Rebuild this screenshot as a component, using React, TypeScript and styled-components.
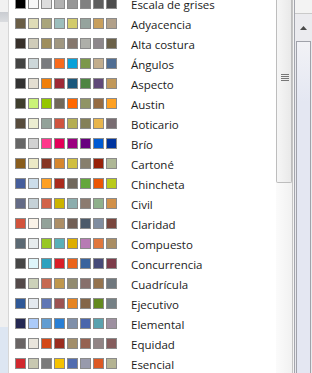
import React from "react";
import styled, { createGlobalStyle } from "styled-components";

const Global = createGlobalStyle`
  html, body { margin: 0; padding: 0; background: #ffffff; }
  body { width: 312px; height: 373px; overflow: hidden; }
  #root { width: 312px; height: 373px; }
`;

type Theme = { name: string; colors: string[] };

const themes: Theme[] = [
  { name: "Escala de grises", colors: ["#000000", "#F8F8F8", "#DDDDDD", "#B2B2B2", "#969696", "#808080", "#5F5F5F", "#4D4D4D"] },
  { name: "Adyacencia", colors: ["#695D46", "#DFDCB7", "#A9A57C", "#9CBEBD", "#D2CB6C", "#95A39D", "#C89F5D", "#B1A089"] },
  { name: "Alta costura", colors: ["#37302A", "#D0CCB9", "#9E8E5C", "#A09781", "#85776D", "#AEAFA9", "#8D878B", "#6B6149"] },
  { name: "Ángulos", colors: ["#434342", "#CDD7D9", "#797B7E", "#F96A1B", "#08A1D9", "#7C984A", "#C2AD8D", "#506E94"] },
  { name: "Aspecto", colors: ["#323232", "#E3DED1", "#F07F09", "#9F2936", "#1B587C", "#4E8542", "#604878", "#C19859"] },
  { name: "Austin", colors: ["#3E3D2D", "#CAF278", "#94C600", "#71685A", "#FF6700", "#909465", "#956B43", "#FEA022"] },
  { name: "Boticario", colors: ["#564B3C", "#ECEDD1", "#93A299", "#CF543F", "#B5AE53", "#848058", "#E8B54D", "#786C71"] },
  { name: "Brío", colors: ["#666666", "#D2D2D2", "#FF388C", "#E40059", "#9C007F", "#68007F", "#005BD3", "#00349E"] },
  { name: "Cartoné", colors: ["#895D1D", "#ECE9C6", "#873624", "#D6862D", "#D0BE40", "#877F6C", "#972109", "#AEB795"] },
  { name: "Chincheta", colors: ["#465E9C", "#CCDDEA", "#FDA023", "#AA2B1E", "#71685C", "#64A73B", "#EB5605", "#B9CA1A"] },
  { name: "Civil", colors: ["#646B86", "#C5D1D7", "#D16349", "#CCB400", "#8CADAE", "#8C7B70", "#8FB08C", "#D19049"] },
  { name: "Claridad", colors: ["#D2533C", "#FAF3E8", "#93A299", "#AD8F67", "#726056", "#4C5A6A", "#808DA0", "#79463D"] },
  { name: "Compuesto", colors: ["#5B6973", "#E7ECED", "#98C723", "#59B0B9", "#DEAE00", "#B77BB4", "#E0773C", "#A98D63"] },
  { name: "Concurrencia", colors: ["#464646", "#DEF5FA", "#2DA2BF", "#DA1F28", "#EB641B", "#39639D", "#474B78", "#7D3C4A"] },
  { name: "Cuadrícula", colors: ["#534949", "#CCD1B9", "#C66951", "#BF974D", "#928B70", "#87706B", "#94734E", "#6F777D"] },
  { name: "Ejecutivo", colors: ["#2F5897", "#E4E9EF", "#6076B4", "#9C5252", "#E68422", "#846648", "#63891F", "#758085"] },
  { name: "Elemental", colors: ["#242852", "#ACCBF9", "#629DD1", "#297FD5", "#7F8FA9", "#4A66AC", "#5AA2AE", "#9D90A0"] },
  { name: "Equidad", colors: ["#696464", "#E9E5DC", "#D34817", "#9B2D1F", "#A28E6A", "#956251", "#918485", "#855D5D"] },
  { name: "Esencial", colors: ["#D1282E", "#C8C8B1", "#7A7A7A", "#F5C201", "#526DB0", "#989AAC", "#DC5924", "#B4B392"] },
];

const Frame = styled.div`
  display: flex;
  width: 312px;
  height: 373px;
  overflow: hidden;
`;

const LeftStrip = styled.div`
  width: 8px;
  flex: none;
  display: flex;
  flex-direction: column;
  border-right: 1px solid #d6d6d6;
  background: #efefef;
`;

const StripTop = styled.div`
  height: 12px;
  background: #f1f1f1;
`;

const StripBand = styled.div`
  height: 10px;
  background: linear-gradient(to bottom, #c9ccd1, #dadcdf);
`;

const StripMid = styled.div`
  flex: 1;
  background: #f0f0f0;
`;

const StripBottom = styled.div`
  height: 46px;
  background: #dde6f2;
`;

const Panel = styled.div`
  flex: 1;
  min-width: 0;
  background: #ffffff;
  padding-left: 6px;
  overflow: hidden;
`;

const List = styled.div`
  margin-top: -6px;
  display: flex;
  flex-direction: column;
`;

const Row = styled.div`
  display: flex;
  align-items: center;
  height: 20px;
`;

const Swatches = styled.div`
  display: flex;
  gap: 2px;
  height: 12px;
  align-items: flex-start;
`;

const Swatch = styled.div<{ $c: string }>`
  width: 11px;
  height: 11px;
  box-sizing: border-box;
  border: 1px solid #8b8b8b;
  background: ${(p) => p.$c};
`;

const Name = styled.span`
  margin-left: 14px;
  font-family: "Open Sans", "Noto Sans", sans-serif;
  font-size: 11.5px;
  color: #1c1c1c;
  white-space: nowrap;
  line-height: 12px;
  padding-top: 1px;
`;

const ScrollBar = styled.div`
  width: 16px;
  flex: none;
  display: flex;
  flex-direction: column;
  background: linear-gradient(to right, #fbfbfb, #f1f1f1);
  border-right: 1px solid #c4c4c4;
`;

const Thumb = styled.div`
  height: 183px;
  box-sizing: border-box;
  border: 1px solid #bdbdbd;
  border-top: none;
  border-radius: 0 0 2px 2px;
  background: linear-gradient(to right, #f6f6f6, #e9e9e9);
  display: flex;
  flex-direction: column;
  align-items: center;
  padding-top: 74px;
  padding-left: 1px;
`;

const Grip = styled.div`
  width: 8px;
  height: 7px;
  background: repeating-linear-gradient(
    to bottom,
    #777777 0px,
    #777777 1px,
    transparent 1px,
    transparent 2px
  );
`;

const Gap = styled.div`
  width: 1px;
  flex: none;
  background: #f4f4f4;
`;

const OuterBar = styled.div`
  width: 17px;
  flex: none;
  display: flex;
  flex-direction: column;
  background: #eaeaee;
  border-left: 1px solid #a3a5ad;
`;

const OuterTop = styled.div`
  height: 13px;
  background: #f3f3f3;
  border-bottom: 1px solid #cacaca;
`;

const OuterArrow = styled.div`
  height: 27px;
  display: flex;
  align-items: center;
  justify-content: center;
  background: #ebebef;
  padding-right: 1px;
`;

const OuterThumb = styled.div`
  flex: 1;
  margin-left: 1px;
  margin-right: 1px;
  border: 1px solid #a0a2aa;
  border-bottom: none;
  background: linear-gradient(to bottom, #f2f2f6, #e4e7f2 60px);
`;

export default function App() {
  return (
    <>
      <Global />
      <Frame>
        <LeftStrip>
          <StripTop />
          <StripBand />
          <StripMid />
          <StripBottom />
        </LeftStrip>
        <Panel>
          <List>
            {themes.map((t) => (
              <Row key={t.name}>
                <Swatches>
                  {t.colors.map((c, i) => (
                    <Swatch key={i} $c={c} />
                  ))}
                </Swatches>
                <Name>{t.name}</Name>
              </Row>
            ))}
          </List>
        </Panel>
        <ScrollBar>
          <Thumb>
            <Grip />
          </Thumb>
        </ScrollBar>
        <Gap />
        <OuterBar>
          <OuterTop />
          <OuterArrow>
            <svg width="7" height="4" viewBox="0 0 7 4">
              <polygon points="0,4 7,4 3.5,0" fill="#4a4a4a" />
            </svg>
          </OuterArrow>
          <OuterThumb />
        </OuterBar>
      </Frame>
    </>
  );
}
